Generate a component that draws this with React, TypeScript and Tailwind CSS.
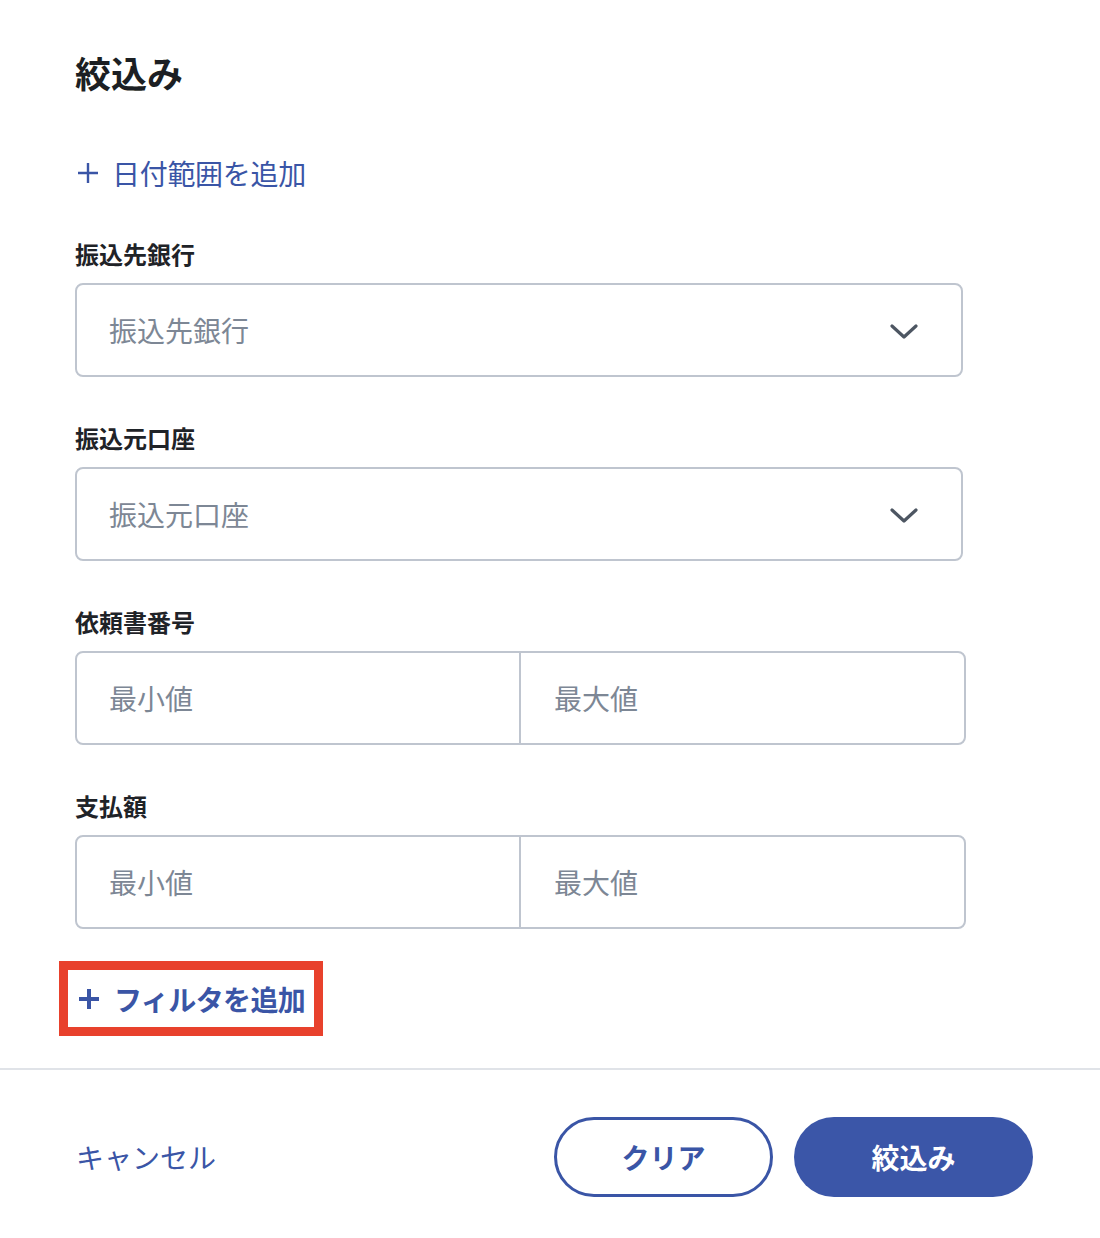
import React from "react";

const FONT = '"Noto Sans CJK JP", "Noto Sans", sans-serif';

function Chevron() {
  return (
    <svg width="28" height="18" viewBox="0 0 28 18" fill="none" className="mt-[4px]">
      <path d="M2 3 L14 14 L26 3" stroke="#4d5662" strokeWidth="3.2" strokeLinecap="round" strokeLinejoin="round" />
    </svg>
  );
}

function Plus({ bold }: { bold?: boolean }) {
  return (
    <svg width="22" height="22" viewBox="0 0 22 22" fill="none">
      <path d="M11 1 V21 M1 11 H21" stroke="#3a55a6" strokeWidth={bold ? 4 : 2.4} />
    </svg>
  );
}

function Label({ children }: { children: React.ReactNode }) {
  return (
    <div className="h-[32px] leading-[32px] text-[24px] font-bold text-[#1f2328] mt-[45px]">{children}</div>
  );
}

function Select({ placeholder }: { placeholder: string }) {
  return (
    <div className="mt-[13px] w-[888px] h-[94px] border-2 border-[#bfc5cf] rounded-[8px] flex items-center justify-between pl-[32px] pr-[43px]">
      <span className="text-[28px] text-[#7d8795]">{placeholder}</span>
      <Chevron />
    </div>
  );
}

function Range() {
  return (
    <div className="mt-[13px] w-[891px] h-[94px] border-2 border-[#bfc5cf] rounded-[8px] flex">
      <div className="w-[444px] h-full flex items-center pl-[32px] border-r-2 border-[#bfc5cf]">
        <span className="text-[28px] text-[#7d8795]">最小値</span>
      </div>
      <div className="flex-1 h-full flex items-center pl-[33px]">
        <span className="text-[28px] text-[#7d8795]">最大値</span>
      </div>
    </div>
  );
}

export default function App() {
  return (
    <div className="w-[1100px] h-[1238px] bg-white flex flex-col" style={{ fontFamily: FONT }}>
      <div className="flex flex-col pl-[75px] pt-[52px]">
        <div className="h-[40px] leading-[40px] text-[36px] font-bold text-[#1c1f23]">絞込み</div>
        <div className="mt-[61px] h-[40px] flex items-center text-[28px] text-[#3a55a6]">
          <span className="ml-[2px] mr-[13px] flex items-center"><Plus /></span>
          <span className="tracking-[-0.3px]">日付範囲を追加</span>
        </div>
        <Label>振込先銀行</Label>
        <Select placeholder="振込先銀行" />
        <Label>振込元口座</Label>
        <Select placeholder="振込元口座" />
        <Label>依頼書番号</Label>
        <Range />
        <Label>支払額</Label>
        <Range />
        <div className="mt-[32px] ml-[-16px] self-start border-[9px] border-[#e8412c] pl-[10px] pr-[9px] py-[8px]">
          <div className="h-[41px] flex items-center text-[28px] font-bold text-[#3a55a6]">
            <span className="mr-[14px] flex items-center"><Plus bold /></span>
            <span className="tracking-[-0.6px]">フィルタを追加</span>
          </div>
        </div>
      </div>
      <div className="mt-[32px] h-[2px] w-full bg-[#e0e3e8]" />
      <div className="flex items-center justify-between pl-[76px] pr-[67px] mt-[47px]">
        <span className="text-[28px] text-[#3a55a6]">キャンセル</span>
        <div className="flex gap-[21px]">
          <button className="w-[219px] h-[80px] rounded-full border-[3px] border-[#3a55a6] bg-white text-[28px] font-bold text-[#3a55a6]">クリア</button>
          <button className="w-[239px] h-[80px] rounded-full bg-[#3b56a8] text-[28px] font-bold text-white">絞込み</button>
        </div>
      </div>
    </div>
  );
}
